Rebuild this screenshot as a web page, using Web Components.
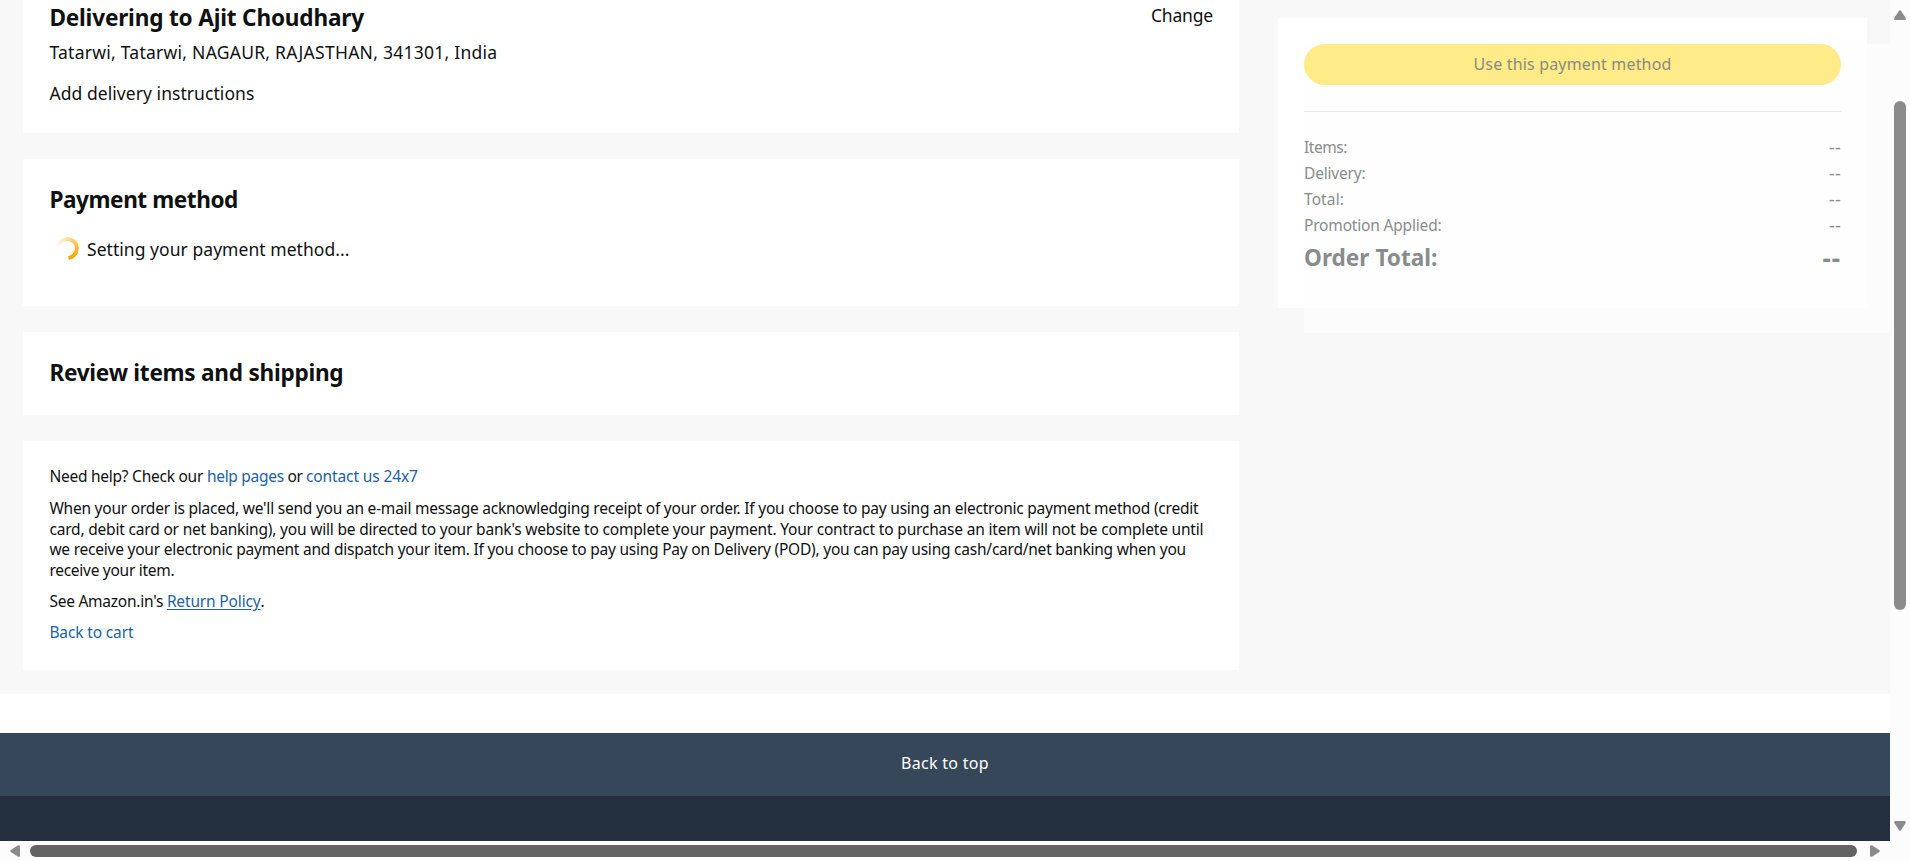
<!DOCTYPE html>
<html lang="en">
<head>
<meta charset="utf-8">
<title>Checkout</title>
<style>
body{margin:0;width:1910px;height:861px;overflow:hidden;background:#fff;color:#0f1111;font-family:"Noto Sans","Open Sans",sans-serif;font-size:15.5px}
</style>
</head>
<body>
<checkout-page></checkout-page>
<script>
const define = (name, html, setup) => {
  const t = document.createElement('template');
  t.innerHTML = html;
  customElements.define(name, class extends HTMLElement {
    constructor() {
      super();
      this.attachShadow({mode: 'open'}).appendChild(t.content.cloneNode(true));
    }
    connectedCallback() { if (setup) setup(this, this.shadowRoot); }
  });
};

define('checkout-card', `<style>:host{display:block;box-sizing:border-box;background:#fff;padding:24px 26px 0 26.4px}</style><slot></slot>`);

define('card-title', `<style>:host{display:block;font-weight:700;font-size:22.6px;line-height:34px;height:32px}</style><slot></slot>`);

define('text-line', `<style>:host{display:block;font-size:17.5px;line-height:26px;height:26px;white-space:pre}:host([small]){font-size:15.5px;line-height:21px;height:21px}</style><slot></slot>`);

define('text-link', `<style>:host{color:#2162a1}:host([underlined]){text-decoration:underline;text-underline-offset:2px}</style><slot></slot>`);

define('load-spinner', `<style>:host{display:block;width:23px;height:23px}
i{display:block;width:23px;height:23px;border-radius:50%;
background:conic-gradient(#ffdc9a 0deg,#fdbf45 70deg,#fbab10 130deg,#f9a300 172deg,transparent 176deg,transparent 270deg,#fff8ea 290deg,#ffe9c2 330deg,#ffdc9a 360deg);
-webkit-mask:radial-gradient(circle,transparent 7px,#000 7.8px,#000 11px,transparent 11.6px)}</style><i></i>`);

define('summary-row', `<style>:host{display:flex;justify-content:space-between;font-size:15.5px;line-height:26px;height:26px}
::slotted([slot=value]){font-size:18px}
:host([total]) ::slotted([slot=value]){font-size:26px}
:host([total]){font-size:22.6px;font-weight:700;line-height:34px;height:32px;margin-top:3px}</style><slot></slot><slot name="value"></slot>`);

define('order-summary', `<style>
:host{display:block;position:relative;box-sizing:border-box;width:589px;height:290px;background:#fff;padding:26px 26px 0;color:#888c8c}
button{display:block;box-sizing:border-box;width:537px;height:41px;border:0;border-radius:20.5px;background:#ffeb87;color:#8a8a80;font:inherit;font-size:16px;line-height:39px;padding:0;text-align:center;position:relative;z-index:1}
hr{border:0;height:1px;margin:26px 0 22px;background:#e7e9e9}
.rows,hr{position:relative;z-index:1}
.veil{position:absolute;left:26px;top:26px;width:586px;height:289px;background:#fcfcfc;clip-path:polygon(563px 0,586px 0,586px 289px,0 289px,0 264px,563px 264px)}
.inner{position:absolute;left:26px;top:26px;width:563px;height:264px;background:#fefefe}
</style>
<div class="veil"></div><div class="inner"></div>
<button><fit-text w="198">Use this payment method</fit-text></button>
<hr>
<div class="rows">
<summary-row><fit-text w="43">Items:</fit-text><fit-text slot="value" w="12">--</fit-text></summary-row>
<summary-row><fit-text w="61.5">Delivery:</fit-text><fit-text slot="value" w="12">--</fit-text></summary-row>
<summary-row><fit-text w="40">Total:</fit-text><fit-text slot="value" w="12">--</fit-text></summary-row>
<summary-row><fit-text w="137.5">Promotion Applied:</fit-text><fit-text slot="value" w="12">--</fit-text></summary-row>
<summary-row total><fit-text w="133.5">Order Total:</fit-text><fit-text slot="value" w="18.5">--</fit-text></summary-row>
</div>`);

define('page-footer', `<style>:host{display:block}
.top{height:63px;background:#37475a;color:#fff;font-size:16px;line-height:60px;text-align:center}
.base{height:45px;background:#232f3e}</style>
<div class="top"><fit-text w="88">Back to top</fit-text></div><div class="base"></div>`);

define('scroll-bar', `<style>
:host{display:flex;box-sizing:border-box;background:#fcfcfc}
:host([vertical]){flex-direction:column;width:20px;height:841px;padding:10px 4px 10px;align-items:center}
:host([horizontal]){width:1910px;height:20px;padding:4px 30px 0 10px;align-items:flex-start}
svg{display:none;fill:#8b8b8b}
:host([vertical]) .v,:host([horizontal]) .h{display:block}
b{display:block;border-radius:6px}
:host([vertical]) b{width:12px;height:509px;background:#8b8b8b;margin:81px 0 auto}
:host([horizontal]) b{height:12px;width:1827px;background:#636363;margin:0 auto 0 10px}
</style>
<svg class="v" width="12" height="10"><path d="M5 .8Q6-.5 7 .8L11.7 8Q12.2 10 10.5 10H1.5Q-.2 10 .3 8Z"/></svg>
<svg class="h" width="10" height="12"><path d="M.8 5Q-.5 6 .8 7L8 11.7Q10 12.2 10 10.5V1.5Q10-.2 8 .3Z"/></svg>
<b></b>
<svg class="v" width="12" height="10"><path d="M5 9.2Q6 10.5 7 9.2L11.7 2Q12.2 0 10.5 0H1.5Q-.2 0 .3 2Z"/></svg>
<svg class="h" width="10" height="12"><path d="M9.2 5Q10.5 6 9.2 7L2 11.7Q0 12.2 0 10.5V1.5Q0-.2 2 .3Z"/></svg>`);

define('checkout-page', `<style>
:host{display:grid;grid-template:841px 20px / 1890px 20px;width:1910px;height:861px;overflow:hidden}
main{display:flex;box-sizing:border-box;height:694px;padding-left:23px;background:#f8f8f8}
.steps{display:flex;flex-direction:column;gap:26px;width:1216px;margin-right:39px}
.address{height:133px;padding-top:1px}
.address .head{display:flex;justify-content:space-between}
.payment{height:147px}.review{height:83px}.help{height:229px;padding-top:25px}
.busy{display:flex;margin-top:21px}
.busy load-spinner{margin:1px 8px 0 6.6px}
order-summary{margin-top:18px}
page-footer{margin-top:39px}
p{margin:11px 0 11px;line-height:20.6px;white-space:nowrap}
p fit-text{display:block}
scroll-bar[horizontal]{grid-column:1 / 3}
</style>
<div>
<main>
<div class="steps">
<checkout-card class="address">
<div class="head"><card-title><fit-text w="314.5">Delivering to Ajit Choudhary</fit-text></card-title><text-line style="margin-top:1px"><fit-text w="62">Change</fit-text></text-line></div>
<text-line style="margin-top:6px"><fit-text w="448">Tatarwi, Tatarwi, NAGAUR, RAJASTHAN, 341301, India</fit-text></text-line>
<text-line style="margin-top:15px"><fit-text w="205">Add delivery instructions</fit-text></text-line>
</checkout-card>
<checkout-card class="payment">
<card-title><fit-text w="188.5">Payment method</fit-text></card-title>
<div class="busy"><load-spinner></load-spinner><text-line><fit-text w="262.5">Setting your payment method...</fit-text></text-line></div>
</checkout-card>
<checkout-card class="review"><card-title><fit-text w="294">Review items and shipping</fit-text></card-title></checkout-card>
<checkout-card class="help">
<text-line small><fit-text w="157.5">Need help? Check our </fit-text><text-link><fit-text w="77">help pages</fit-text></text-link><fit-text w="22"> or </fit-text><text-link><fit-text w="112">contact us 24x7</fit-text></text-link></text-line>
<p><fit-text w="1149">When your order is placed, we'll send you an e-mail message acknowledging receipt of your order. If you choose to pay using an electronic payment method (credit</fit-text><fit-text w="1154">card, debit card or net banking), you will be directed to your bank's website to complete your payment. Your contract to purchase an item will not be complete until</fit-text><fit-text w="1136.5">we receive your electronic payment and dispatch your item. If you choose to pay using Pay on Delivery (POD), you can pay using cash/card/net banking when you</fit-text><fit-text w="125">receive your item.</fit-text></p>
<text-line small><fit-text w="117.5">See Amazon.in's </fit-text><text-link underlined><fit-text w="93">Return Policy</fit-text></text-link>.</text-line>
<text-line small style="margin-top:10px"><text-link><fit-text w="84">Back to cart</fit-text></text-link></text-line>
</checkout-card>
</div>
<order-summary></order-summary>
</main>
<page-footer></page-footer>
</div>
<scroll-bar vertical></scroll-bar>
<scroll-bar horizontal></scroll-bar>`);

/* Tracks its text so that the run takes up the width given in "w". */
define('fit-text', `<style>:host{display:inline;white-space:pre}span{white-space:pre}</style><span><slot></slot></span>`, (el, root) => {
  const span = root.querySelector('span');
  const natural = span.getBoundingClientRect().width;
  span.style.letterSpacing = ((+el.getAttribute('w') - natural) / el.textContent.length) + 'px';
});
</script>
</body>
</html>
